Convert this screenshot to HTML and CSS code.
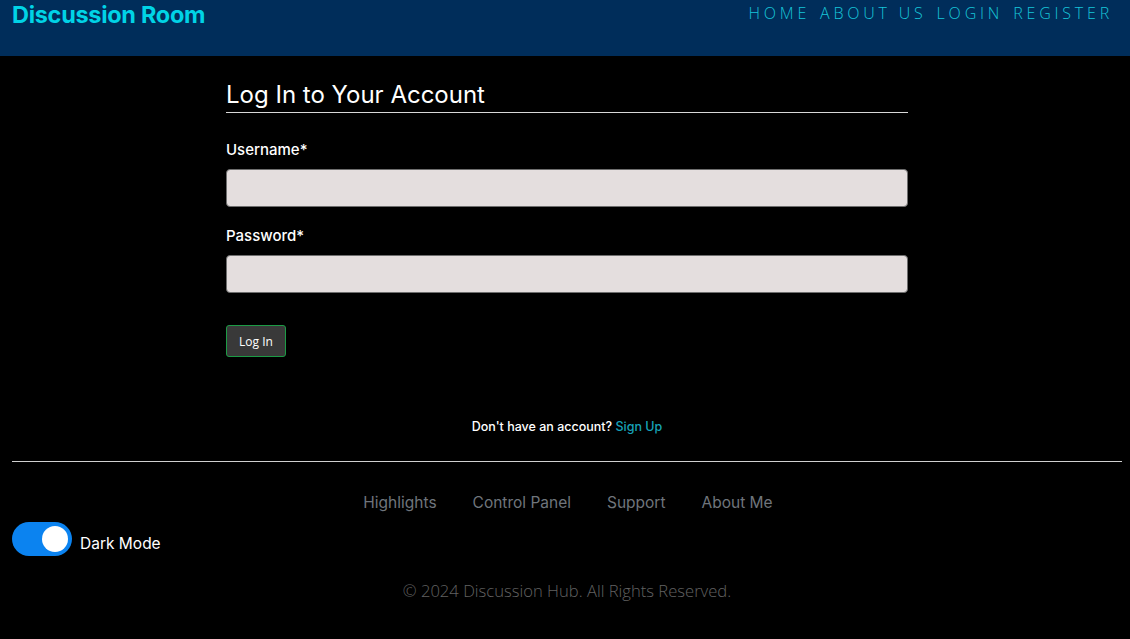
FILE: index.html
```html
<!DOCTYPE html>
<html lang="en">
<head>
<meta charset="utf-8">
<title>Discussion Room</title>
<link rel="stylesheet" href="styles.css">
</head>
<body>
<header class="topbar">
  <a class="brand" href="#">Discussion Room</a>
  <nav class="mainnav">
    <a href="#">HOME</a>
    <a href="#">ABOUT US</a>
    <a href="#">LOGIN</a>
    <a href="#">REGISTER</a>
  </nav>
</header>
<main class="content">
  <section class="login">
    <h1 class="login-title">Log In to Your Account</h1>
    <form class="login-form">
      <label class="field-label" for="username">Username*</label>
      <input class="field-input" id="username" type="text">
      <label class="field-label" for="password">Password*</label>
      <input class="field-input" id="password" type="password">
      <button class="btn-login" type="button">Log In</button>
    </form>
  </section>
  <p class="signup">Don't have an account? <a href="#">Sign Up</a></p>
</main>
<footer class="footer">
  <div class="footer-rule"></div>
  <nav class="footer-links">
    <a href="#">Highlights</a>
    <a href="#">Control Panel</a>
    <a href="#">Support</a>
    <a href="#">About Me</a>
  </nav>
  <div class="toggle-row">
    <span class="toggle"><span class="knob"></span></span>
    <span class="toggle-label">Dark Mode</span>
  </div>
  <p class="copyright">© 2024 Discussion Hub. All Rights Reserved.</p>
</footer>
</body>
</html>
```
FILE: styles.css
```css
* { box-sizing: border-box; }
html, body { margin: 0; padding: 0; }
body {
  background: #000;
  color: #fff;
  font-family: Inter, "Noto Sans", sans-serif;
  width: 1130px;
  min-height: 639px;
}
a { text-decoration: none; }

.topbar {
  height: 56px;
  background: #002d5a;
  display: flex;
  justify-content: space-between;
  align-items: flex-start;
  padding: 0 12px;
}
.brand {
  color: #00d3e6;
  font-size: 23.5px;
  font-weight: 700;
  line-height: 30px;
  letter-spacing: -0.3px;
}
.mainnav {
  display: flex;
  gap: 10px;
  padding-top: 3px;
  margin-right: 9px;
}
.mainnav a {
  color: #17c5d8;
  font-family: "Open Sans", sans-serif;
  font-weight: 300;
  font-size: 16px;
  letter-spacing: 3.8px;
  line-height: 20px;
}
.mainnav a:last-child { margin-right: -4px; }

.content {
  display: flex;
  flex-direction: column;
  align-items: center;
}
.login {
  width: 682px;
  margin-left: 4px;
  padding-top: 24px;
}
.login-title {
  margin: 0;
  font-size: 24px;
  font-weight: 400;
  line-height: 30px;
  padding-bottom: 2px;
  border-bottom: 1px solid #d8d8d8;
}
.login-form {
  display: flex;
  flex-direction: column;
  align-items: flex-start;
  padding-top: 26px;
}
.field-label {
  font-size: 15px;
  font-weight: 500;
  line-height: 22px;
  margin-bottom: 8px;
}
.field-input {
  width: 100%;
  height: 38px;
  background: #e4dede;
  border: 1px solid #6e6e6e;
  border-radius: 4px;
  margin: 0 0 18px;
  font-size: 16px;
}
.btn-login {
  margin-top: 14px;
  width: 60px;
  height: 32px;
  background: #393939;
  border: 1px solid #1c9b45;
  border-radius: 3px;
  color: #fff;
  font-family: "Open Sans", sans-serif;
  font-weight: 400;
  font-size: 12px;
  padding: 0;
}
.signup {
  margin: 62px 0 0 4px;
  font-size: 12.5px;
  font-weight: 500;
  line-height: 16px;
}
.signup a { color: #17a2b8; }

.footer {
  padding: 26px 8px 0 12px;
}
.footer-rule {
  border-top: 1px solid #d0d0d0;
}
.footer-links {
  display: flex;
  justify-content: center;
  padding-top: 30px;
  margin-left: 2px;
}
.footer-links a {
  color: #6f757c;
  font-size: 15.5px;
  line-height: 22px;
  padding: 0 18px;
}
.toggle-row {
  display: flex;
  align-items: center;
  gap: 8px;
  margin-top: 8px;
}
.toggle {
  width: 60px;
  height: 34px;
  border-radius: 17px;
  background: #0b83f0;
  display: flex;
  align-items: center;
  justify-content: flex-end;
  padding-right: 4px;
}
.knob {
  width: 26px;
  height: 26px;
  border-radius: 50%;
  background: #fff;
}
.toggle-label {
  font-size: 15.5px;
  line-height: 22px;
  padding-top: 9px;
}
.copyright {
  margin: 24px 0 0;
  text-align: center;
  color: #626262;
  font-family: "Open Sans", sans-serif;
  font-weight: 300;
  font-size: 16.6px;
  line-height: 22px;
}
```
